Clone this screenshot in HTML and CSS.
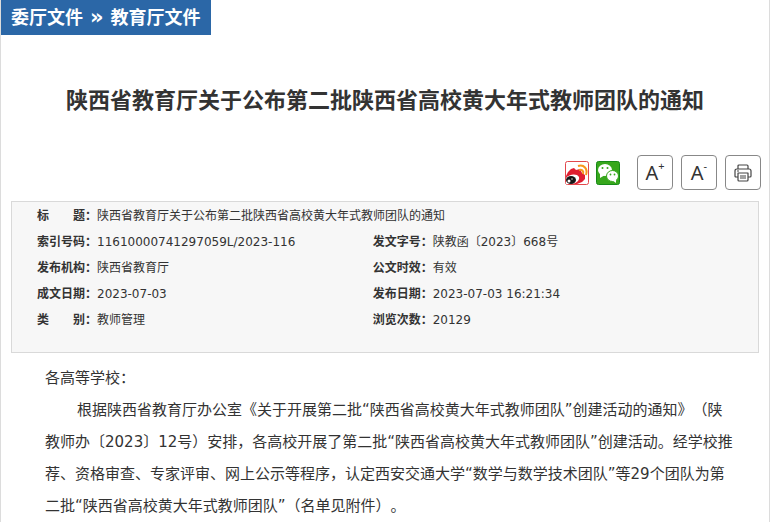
FILE: index.html
```html
<!DOCTYPE html>
<html lang="zh-CN">
<head>
<meta charset="UTF-8">
<title>陕西省教育厅关于公布第二批陕西省高校黄大年式教师团队的通知</title>
<link rel="stylesheet" href="styles.css">
</head>
<body>
<div class="page">
	<div class="crumb">
		<a href="#">委厅文件</a>
		<span>»</span>
		<a href="#">教育厅文件</a>
	</div>

	<h1 class="title">陕西省教育厅关于公布第二批陕西省高校黄大年式教师团队的通知</h1>

	<div class="tools">
		<div class="share">
			<a href="#" aria-label="微博">
				<svg viewBox="0 0 24 24" width="24" height="24">
					<rect x="0.5" y="0.5" width="23" height="23" rx="2" fill="#fff" stroke="#e2474b"/>
					<path d="M1 15L3 11L6 8L9 7L11 9L15 8L17 12L20 14L20 18L17 21L12 23H1Z" fill="#e01f30"/>
					<path d="M1 17C4 13 12 12 14 16C15 20 10 23 6 23H1Z" fill="#fff"/>
					<ellipse cx="6" cy="19" rx="5" ry="4" fill="#161616"/>
					<circle cx="4" cy="20" r="1.500" fill="#fff"/>
					<circle cx="7" cy="18" r="0.700" fill="#fff"/>
					<path d="M13 5C19 3 23 8 21 14M14 9C17 8 19 10 18 13" fill="none" stroke="#f7981d" stroke-width="2"/>
				</svg>
			</a>
			<a href="#" aria-label="微信">
				<svg viewBox="0 0 24 24" width="24" height="24">
					<rect x="0.5" y="0.5" width="23" height="23" rx="2" fill="#37a71c" stroke="#168a17"/>
					<ellipse cx="9" cy="9" rx="7" ry="6" fill="#fff"/>
					<path d="M4 12L4 17L9 14Z" fill="#fff"/>
					<ellipse cx="16.500" cy="15" rx="6" ry="5.500" fill="#fff" stroke="#37a71c"/>
					<path d="M16 19L20 22L20 18Z" fill="#fff"/>
					<g fill="#37a71c"><circle cx="6.500" cy="7" r="1"/><circle cx="11.500" cy="7" r="1"/><circle cx="14.500" cy="13.500" r="0.900"/><circle cx="18.500" cy="13.500" r="0.900"/></g>
				</svg>
			</a>
		</div>
		<button type="button" class="btn">A<sup>+</sup></button>
		<button type="button" class="btn">A<sup>-</sup></button>
		<button type="button" class="btn" aria-label="打印">
			<svg viewBox="0 0 18 18" width="18" height="18" fill="none" stroke="#444" stroke-width="1.2" stroke-linejoin="round">
				<path d="M4 5V2Q4 1 5 1H13Q14 1 14 2V5M4 13H2Q1 13 1 12V7Q1 5 3 5H15Q17 5 17 7V12Q17 13 16 13H14M4 9H14V16Q14 17 13 17H5Q4 17 4 16ZM6 12H12M6 14H12M3 7H5"/>
			</svg>
		</button>
	</div>

	<dl class="info">
		<div class="item wide"><dt>标　　题：</dt><dd>陕西省教育厅关于公布第二批陕西省高校黄大年式教师团队的通知</dd></div>
		<div class="item"><dt>索引号码：</dt><dd>11610000741297059L/2023-116</dd></div>
		<div class="item"><dt>发文字号：</dt><dd>陕教函〔2023〕668号</dd></div>
		<div class="item"><dt>发布机构：</dt><dd>陕西省教育厅</dd></div>
		<div class="item"><dt>公文时效：</dt><dd>有效</dd></div>
		<div class="item"><dt>成文日期：</dt><dd>2023-07-03</dd></div>
		<div class="item"><dt>发布日期：</dt><dd>2023-07-03 16:21:34</dd></div>
		<div class="item"><dt>类　　别：</dt><dd>教师管理</dd></div>
		<div class="item"><dt>浏览次数：</dt><dd>20129</dd></div>
	</dl>

	<div class="content">
		<p>各高等学校：</p>
		<p class="indent">根据陕西省教育厅办公室《关于开展第二批“陕西省高校黄大年式教师团队”创建活动的通知》（陕教师办〔2023〕12号）安排，各高校开展了第二批“陕西省高校黄大年式教师团队”创建活动。经学校推荐、资格审查、专家评审、网上公示等程序，认定西安交通大学“数学与数学技术团队”等29个团队为第二批“陕西省高校黄大年式教师团队”（名单见附件）。</p>
	</div>
</div>
</body>
</html>
```
FILE: styles.css
```css
* {box-sizing: border-box;}

body {
	margin: 0;
	color: #333;
	font-family: "DejaVu Sans", "Noto Sans CJK SC", sans-serif;
	text-spacing-trim: space-all;
}

.page {
	min-height: 100vh;
	border-left: 1px solid #dcdcdc;
	border-right: 1px solid #dcdcdc;
}

/* 栏目导航 */
.crumb {
	display: flex;
	gap: 7px;
	width: fit-content;
	padding: 0 10px;
	background: #2b67a7;
	color: #fff;
	font-size: 18px;
	font-weight: bold;
	line-height: 35px;
}
.crumb a {color: #fff; text-decoration: none;}
.crumb span {font-size: 21px;}

.title {
	margin: 50px 10px 38px;
	font-size: 22px;
	line-height: 32px;
	text-align: center;
}

/* 分享、字号、打印 */
.tools {
	display: flex;
	justify-content: flex-end;
	align-items: center;
	gap: 8px;
	padding-right: 8px;
}
.share {display: flex; gap: 7px; margin-right: 9px;}
.share svg {display: block;}
.btn {
	display: flex;
	justify-content: center;
	align-items: center;
	width: 36px;
	height: 35px;
	padding: 0;
	border: 1px solid #888;
	border-radius: 4px;
	background: #fff;
	color: #333;
	font-family: "Noto Sans", sans-serif;
	font-size: 20px;
}
.btn sup {align-self: flex-start; font-size: 11px; line-height: 20px;}

/* 公文信息 */
.info {
	display: grid;
	grid-template-columns: 45% 1fr;
	margin: 11px 10px 0;
	padding: 1px 0 19px;
	border: 1px solid #d9d9d9;
	background: #f7f7f7;
	font-size: 12px;
	line-height: 26px;
}
.item {display: flex; padding-left: 25px;}
.wide {grid-column: 1 / 3;}
.info dt {flex: none; width: 60px; font-weight: bold;}
.info dd {margin: 0;}

/* 正文 */
.content {
	padding: 9px 34px 0 44px;
	font-size: 15px;
	line-height: 32px;
}
.content p {margin: 0;}
.content .indent {text-indent: 32px;}
```
